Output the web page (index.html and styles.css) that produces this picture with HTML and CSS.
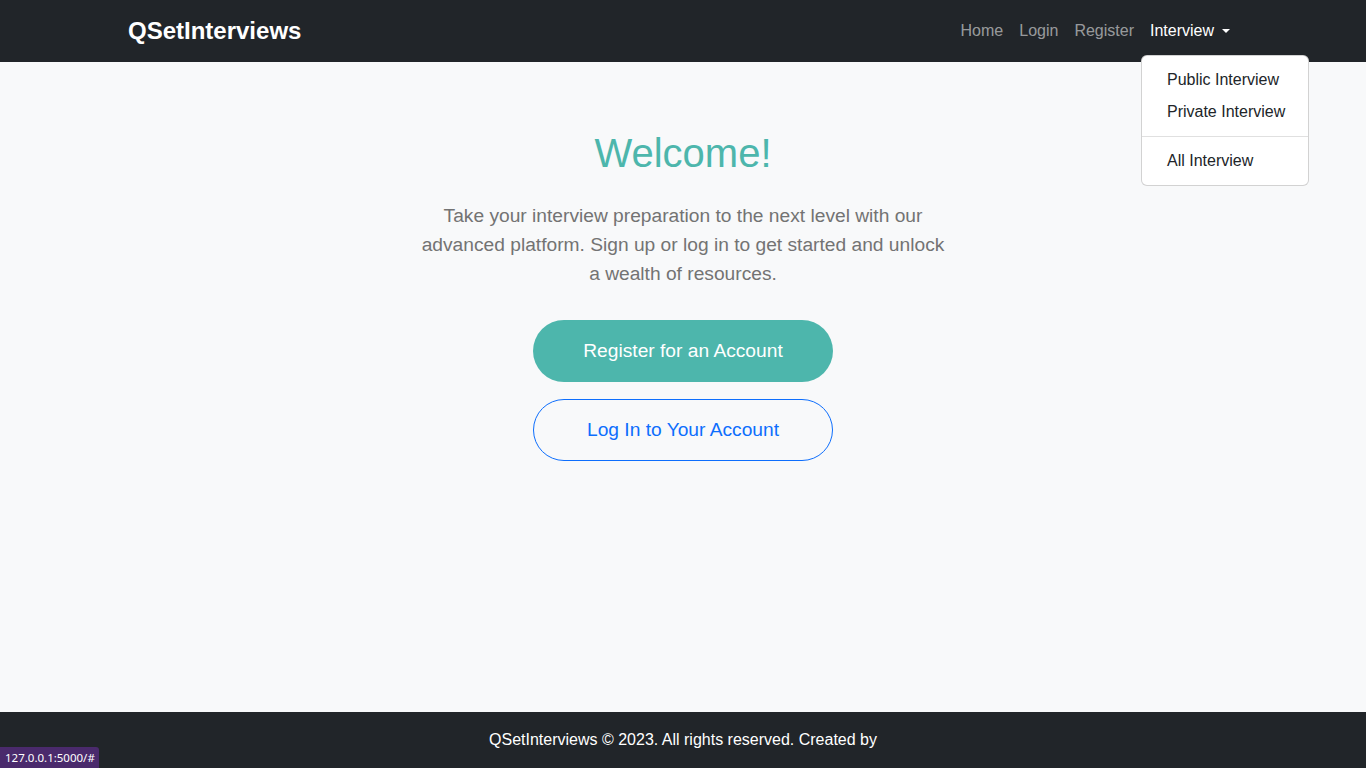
FILE: index.html
```html
<!DOCTYPE html>
<html lang="en">
<head>
<meta charset="utf-8">
<title>QSetInterviews</title>
<link rel="stylesheet" href="styles.css">
</head>
<body>
<div class="page">
  <nav class="navbar">
    <div class="container nav-inner">
      <a class="brand" href="#">QSetInterviews</a>
      <ul class="nav-links">
        <li><a class="nav-link" href="#">Home</a></li>
        <li><a class="nav-link" href="#">Login</a></li>
        <li><a class="nav-link" href="#">Register</a></li>
        <li class="dropdown">
          <a class="nav-link active" href="#">Interview<span class="caret"></span></a>
          <div class="dropdown-menu">
            <a class="dropdown-item" href="#">Public Interview</a>
            <a class="dropdown-item" href="#">Private Interview</a>
            <hr class="dropdown-divider">
            <a class="dropdown-item" href="#">All Interview</a>
          </div>
        </li>
      </ul>
    </div>
  </nav>
  <main class="hero">
    <h1 class="title">Welcome!</h1>
    <p class="lead">Take your interview preparation to the next level with our advanced platform. Sign up or log in to get started and unlock a wealth of resources.</p>
    <div class="actions">
      <a class="btn btn-primary" href="#">Register for an Account</a>
      <a class="btn btn-outline" href="#">Log In to Your Account</a>
    </div>
  </main>
  <footer class="footer">
    <p>QSetInterviews © 2023. All rights reserved. Created by</p>
  </footer>
</div>
<div class="status">127.0.0.1:5000/#</div>
</body>
</html>
```

FILE: styles.css
```css
* { box-sizing: border-box; }
html, body { margin: 0; padding: 0; }
body {
  font-family: "Liberation Sans", Arial, sans-serif;
  font-size: 16px;
  line-height: 1.5;
  color: #212529;
  background: #f8f9fa;
}
a { text-decoration: none; }
.page {
  min-height: 100vh;
  display: flex;
  flex-direction: column;
}
.navbar {
  background: #212529;
  height: 62px;
  display: flex;
  align-items: center;
}
.container {
  width: 1110px;
  margin: 0 auto;
}
.nav-inner {
  display: flex;
  align-items: center;
  justify-content: space-between;
}
.brand {
  color: #fff;
  font-weight: 700;
  font-size: 24px;
  line-height: 36px;
}
.nav-links {
  list-style: none;
  margin: 0;
  padding: 0;
  display: flex;
  align-items: center;
}
.nav-link {
  display: block;
  padding: 8px 8px;
  line-height: 24px;
  color: rgba(255, 255, 255, 0.55);
}
.nav-link.active { color: #fff; }
.caret {
  display: inline-block;
  margin-left: 8px;
  vertical-align: 3px;
  border-top: 4px solid #fff;
  border-left: 4px solid transparent;
  border-right: 4px solid transparent;
}
.dropdown { position: relative; }
.dropdown-menu {
  position: absolute;
  top: calc(100% + 4px);
  left: -1px;
  width: 168px;
  background: #fff;
  border: 1px solid rgba(0, 0, 0, 0.175);
  border-radius: 6px;
  padding: 8px 0;
  z-index: 10;
}
.dropdown-item {
  display: block;
  padding: 4px 25px;
  line-height: 24px;
  color: #212529;
  white-space: nowrap;
}
.dropdown-divider {
  margin: 8px 0;
  border: 0;
  border-top: 1px solid rgba(0, 0, 0, 0.12);
  height: 0;
}
.hero {
  flex: 1;
  display: flex;
  flex-direction: column;
  align-items: center;
  padding-top: 67px;
  text-align: center;
}
.title {
  margin: 0;
  font-size: 40px;
  font-weight: 400;
  line-height: 48px;
  color: #4db6ac;
}
.lead {
  margin: 24px 0 0;
  width: 530px;
  font-size: 19.2px;
  line-height: 29px;
  color: #737373;
}
.actions {
  margin-top: 32px;
  display: flex;
  flex-direction: column;
  gap: 17px;
}
.btn {
  display: flex;
  align-items: center;
  justify-content: center;
  width: 300px;
  height: 62px;
  border-radius: 31px;
  font-size: 19.2px;
}
.btn-primary {
  background: #4db6ac;
  color: #fff;
}
.btn-outline {
  border: 1px solid #0d6efd;
  color: #0d6efd;
}
.footer {
  background: #212529;
  height: 56px;
  display: flex;
  align-items: center;
  justify-content: center;
}
.footer p {
  margin: 0;
  color: #fff;
  font-size: 16px;
}
.status {
  position: fixed;
  left: 0;
  bottom: 0;
  min-width: 97px;
  height: 21px;
  background: #4a2a6c;
  color: #fff;
  font-family: "Noto Sans", "DejaVu Sans", sans-serif;
  font-size: 11.5px;
  line-height: 21px;
  padding: 0 4px 0 5px;
  border-top-right-radius: 3px;
  white-space: nowrap;
}
```
